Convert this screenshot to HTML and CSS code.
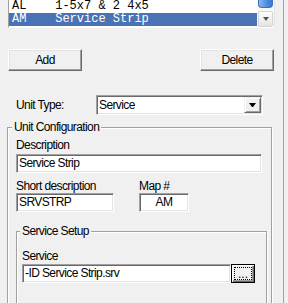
FILE: index.html
```html
<!DOCTYPE html>
<html>
<head>
    <title>Unit Setup</title>
    <link rel="stylesheet" href="styles.css">
</head>
<body>
    <div class="panel">
        <div class="list">
            <div class="rows">
                <div class="row">AL    1-5x7 &amp; 2 4x5</div>
                <div class="row sel">AM    Service Strip</div>
            </div>
            <div class="vscroll">
                <div class="thumb"></div>
                <div class="arrow-btn"><span class="tri"></span></div>
            </div>
        </div>

        <div class="actions">
            <button class="btn">Add</button>
            <button class="btn">Delete</button>
        </div>

        <div class="type-row">
            <label class="type-label">Unit Type:</label>
            <div class="combo">
                <span class="combo-text">Service</span>
                <span class="combo-btn"><span class="tri dark"></span></span>
            </div>
        </div>

        <fieldset class="group">
            <legend>Unit Configuration</legend>
            <div class="field-label">Description</div>
            <div class="field wide">Service Strip</div>

            <div class="short-row">
                <div class="col">
                    <div class="field-label">Short description</div>
                    <div class="field short-field">SRVSTRP</div>
                </div>
                <div class="col">
                    <div class="field-label">Map #</div>
                    <div class="field map-field">AM</div>
                </div>
            </div>

            <fieldset class="group inner">
                <legend>Service Setup</legend>
                <div class="field-label">Service</div>
                <div class="svc-row">
                    <div class="field svc-field">-ID Service Strip.srv</div>
                    <button class="btn browse"><span class="focus">...</span></button>
                </div>
            </fieldset>
        </fieldset>
    </div>
</body>
</html>
```

FILE: styles.css
```css
body {
    margin: 0;
    background: #f0f0f0;
    font-family: "Liberation Sans", Arial, sans-serif;
    font-size: 12px;
    letter-spacing: -0.6px;
    color: #000;
}
.panel {
    width: 284px;
    height: 303px;
    box-sizing: border-box;
    padding-left: 8px;
    border-right: 1px solid #a0a0a0;
    overflow: hidden;
}

/* list box */
.list {
    display: flex;
    width: 267px;
    height: 28px;
    box-sizing: border-box;
    background: #fff;
    border-left: 1px solid #a0a0a0;
    border-right: 1px solid #e3e3e3;
    border-bottom: 1px solid #fff;
}
.rows {
    flex: 1;
}
.row {
    height: 13px;
    line-height: 13px;
    padding-left: 3px;
    font-family: "Liberation Mono", monospace;
    font-size: 12px;
    letter-spacing: 0;
    white-space: pre;
}
.row.sel {
    background: #4a73b5;
    color: #fff;
}
.vscroll {
    width: 17px;
    background: #f7f7f7;
    display: flex;
    flex-direction: column;
}
.thumb {
    height: 7px;
    margin: 0 1px 3px;
    border: 1px solid #3b6fb6;
    border-top: none;
    border-radius: 0 0 4px 4px;
    background: linear-gradient(to right, #8ab8ee, #4d8ee0 60%, #3a78cc);
}
.arrow-btn {
    height: 16px;
    margin: 0 1px;
    box-sizing: border-box;
    border: 1px solid #d4d4d4;
    border-radius: 2px;
    background: linear-gradient(#fdfdfd, #e4e4e4);
    display: flex;
    align-items: center;
    justify-content: center;
}
.tri {
    width: 0;
    border-left: 3px solid transparent;
    border-right: 3px solid transparent;
    border-top: 4px solid #555;
}
.tri.dark {
    width: 1px;
    border-top-color: #000;
}

/* buttons */
.actions {
    display: flex;
    justify-content: space-between;
    width: 266px;
    margin-top: 21px;
}
.btn {
    width: 74px;
    height: 22px;
    box-sizing: border-box;
    padding: 0;
    font: inherit;
    letter-spacing: inherit;
    color: #000;
    background: #f0f0f0;
    border: 1px solid;
    border-color: #fff #696969 #696969 #fff;
    box-shadow: inset -1px -1px #a0a0a0, inset 1px 1px #e3e3e3;
}

/* unit type */
.type-row {
    display: flex;
    align-items: center;
    margin-top: 24px;
    height: 20px;
}
.type-label {
    width: 88px;
    padding-left: 8px;
    box-sizing: border-box;
}
.combo {
    width: 167px;
    height: 20px;
    box-sizing: border-box;
    padding: 1px;
    background: #fff;
    border: 1px solid;
    border-color: #a0a0a0 #fff #fff #a0a0a0;
    box-shadow: inset 1px 1px #696969, inset -1px -1px #e3e3e3;
    display: flex;
    align-items: center;
}
.combo-text {
    flex: 1;
    padding-left: 1px;
}
.combo-btn {
    width: 17px;
    height: 16px;
    box-sizing: border-box;
    background: #f0f0f0;
    border: 1px solid;
    border-color: #f0f0f0 #696969 #696969 #f0f0f0;
    box-shadow: inset 1px 1px #fff, inset -1px -1px #a0a0a0;
    display: flex;
    align-items: center;
    justify-content: center;
}

/* group boxes */
.group {
    margin: 5px 0 0 -1px;
    width: 265px;
    min-width: 0;
    box-sizing: border-box;
    padding: 4px 9px 40px 8px;
    border: 1px solid #a0a0a0;
    box-shadow: inset 1px 1px #fff, 1px 1px #fff;
}
.group legend {
    padding: 0 2px;
    margin-left: -4px;
    line-height: 14px;
    background: #f0f0f0;
}
.group.inner {
    margin: 12px 0 0 0;
    width: 251px;
    padding: 11px 0 40px 5px;
}
.group.inner legend {
    margin-left: -2px;
}

/* fields */
.field-label {
    line-height: 14px;
}
.field {
    height: 19px;
    box-sizing: border-box;
    padding: 0 2px;
    line-height: 17px;
    white-space: nowrap;
    overflow: hidden;
    background: #fff;
    border: 1px solid;
    border-color: #a0a0a0 #fff #fff #a0a0a0;
    box-shadow: inset 1px 1px #696969, inset -1px -1px #e3e3e3;
}
.wide {
    margin-top: 2px;
    width: 246px;
}
.short-row {
    display: flex;
    gap: 25px;
    margin-top: 6px;
}
.short-field {
    width: 98px;
}
.map-field {
    width: 50px;
    text-align: center;
}
.svc-row {
    display: flex;
    margin-top: 1px;
}
.svc-field {
    width: 209px;
}
.browse {
    width: 24px;
    height: 19px;
    padding: 2px;
    border: 1px solid #000;
    box-shadow: inset 1px 1px #fff, inset -1px -1px #696969, inset -2px -2px #a0a0a0;
}
.focus {
    display: flex;
    align-items: flex-end;
    justify-content: center;
    height: 100%;
    box-sizing: border-box;
    border: 1px dotted #000;
    line-height: 9px;
    letter-spacing: 0;
}
```
